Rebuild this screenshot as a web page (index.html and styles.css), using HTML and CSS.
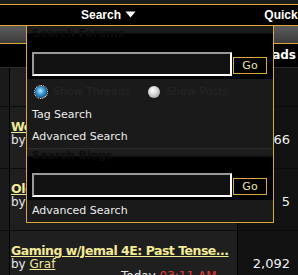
FILE: index.html
```html
<!DOCTYPE html>
<html lang="en">
<head>
    <meta charset="UTF-8">
    <title>Forum</title>
    <link rel="stylesheet" href="styles.css">
</head>
<body>
    <div class="topstrip"></div>
    <div class="navbar">
        <span class="navlink search-link">Search <svg class="arrow" width="11" height="7" viewBox="0 0 11 7"><path d="M0.5 0.5 H10.5 L5.5 6.5 Z" fill="#fff"/></svg></span>
        <span class="navlink quick-link">Quick Links</span>
    </div>
    <div class="tcat"></div>

    <table class="forums">
        <tr class="colhead">
            <td class="c-icon"></td>
            <td class="c-main"></td>
            <td class="c-num">Threads</td>
            <td class="c-more"></td>
        </tr>
        <tr class="row-short">
            <td class="c-icon"></td>
            <td class="c-main"></td>
            <td class="c-num"></td>
            <td class="c-more"></td>
        </tr>
        <tr class="row">
            <td class="c-icon"></td>
            <td class="c-main">
                <a class="title" href="#">Welcome to the Boards</a><br>
                by <a class="user" href="#">Admin</a><br>
                <span class="when">Yesterday <span class="time">11:42 PM</span></span>
            </td>
            <td class="c-num">66</td>
            <td class="c-more"></td>
        </tr>
        <tr class="row">
            <td class="c-icon"></td>
            <td class="c-main">
                <a class="title" href="#">Old Campaign Archive</a><br>
                by <a class="user" href="#">Mira</a><br>
                <span class="when">Today <span class="time">01:05 AM</span></span>
            </td>
            <td class="c-num">5</td>
            <td class="c-more"></td>
        </tr>
        <tr class="row">
            <td class="c-icon"></td>
            <td class="c-main">
                <a class="title" href="#">Gaming w/Jemal 4E: Past Tense...</a><br>
                by <a class="user" href="#">Graf</a><br>
                <span class="when">Today <span class="time">03:11 AM</span></span>
            </td>
            <td class="c-num">2,092</td>
            <td class="c-more"></td>
        </tr>
    </table>

    <!-- search dropdown, open over the forum list -->
    <div class="popup">
        <div class="menu-head">Search Forums</div>
        <div class="menu-form">
            <input class="field" type="text">
            <button class="go">Go</button>
        </div>
        <div class="menu-radios">
            <span class="radio checked"></span><span class="radio-label">Show Threads</span>
            <span class="radio"></span><span class="radio-label">Show Posts</span>
        </div>
        <div class="menu-option">Tag Search</div>
        <div class="menu-option">Advanced Search</div>

        <div class="menu-head">Search Blogs</div>
        <div class="menu-form">
            <input class="field" type="text">
            <button class="go">Go</button>
        </div>
        <div class="menu-option">Advanced Search</div>
    </div>
</body>
</html>
```

FILE: styles.css
```css
body {
    margin: 0;
    background: #1a1a1a;
    font-family: "DejaVu Sans", Verdana, sans-serif;
    font-size: 11px;
    color: #e6e6e6;
    overflow: hidden;
    position: relative;
}

.topstrip {
    height: 4px;
    background: #1d1d1d;
    border-bottom: 1px solid #d9a93a;
}

.navbar {
    height: 20px;
    background: #000;
    display: flex;
    align-items: center;
    padding-left: 81px;
    border-bottom: 1px solid #d9a93a;
    white-space: nowrap;
}

.navlink {
    font-family: "Liberation Sans", Arial, sans-serif;
    font-weight: bold;
    font-size: 12px;
    color: #fff;
}

.arrow {
    margin-left: 1px;
    vertical-align: 1px;
}

.quick-link {
    margin-left: 128px;
}

.tcat {
    height: 17px;
    background: linear-gradient(#5c5c5c, #3c3c3c);
    border-bottom: 1px solid #d9a93a;
}

.forums {
    border-collapse: collapse;
    table-layout: fixed;
    width: 330px;
}

.forums td {
    padding: 0;
    vertical-align: middle;
    border-right: 1px solid #000;
}

.c-icon {
    width: 9px;
}

.c-main {
    width: 226px;
    padding-left: 1px !important;
    background: #1f1f1f;
    font-size: 12px;
    line-height: 12.5px;
    color: #e8e8e8;
    white-space: nowrap;
    overflow: hidden;
}

.row .c-main {
    padding-top: 6px !important;
}

.c-num {
    width: 58px;
    background: #121212;
    text-align: right;
    padding-right: 11px !important;
    font-size: 13px;
    color: #f0f0f0;
}

.row .c-num {
    padding-top: 5px !important;
}

.c-more {
    width: 30px;
    background: #1a1a1a;
}

.colhead {
    height: 23px;
}

.colhead td {
    background: #000;
    font-weight: bold;
    font-size: 12px;
    color: #fff;
    border-bottom: 1px solid #2a2a2a;
}

.colhead .c-num {
    padding-right: 5px !important;
}

.row td,
.row-short td {
    border-bottom: 1px solid #0c0c0c;
}

.row-short {
    height: 39px;
}

.row {
    height: 62px;
}

.title {
    font-weight: bold;
    font-size: 12.5px;
    letter-spacing: -0.5px;
    color: #f2ea96;
}

.user {
    color: #f2ea96;
}

.time {
    color: #e03a3a;
}

.when {
    padding-left: 110px;
}

/* dropdown */
.popup {
    position: absolute;
    left: 26px;
    top: 25px;
    width: 246px;
    border: 1px solid #d9a93a;
    background: #1a1a1a;
}

.menu-head {
    height: 22px;
    box-sizing: border-box;
    padding: 1px 5px 0;
    background: linear-gradient(#1e1e1e 0, #1a1a1a 7px, #000 8px);
    color: #0d0d0d;
    font-weight: bold;
    font-size: 11px;
}

.menu-option + .menu-head {
    border-top: 1px solid #2c2c2c;
    height: 21px;
    padding-top: 0;
}

.menu-head + .menu-form {
    background: #000;
}

.menu-form {
    display: flex;
    padding: 4px 5px 3px;
}

.field {
    width: 200px;
    height: 24px;
    box-sizing: border-box;
    margin: 0;
    background: #121212;
    border: 2px solid;
    border-color: #9a9a9a #fff #fff #9a9a9a;
    color: #fff;
}

.go {
    align-self: flex-end;
    margin: 0 0 2px 1px;
    width: 34px;
    height: 17px;
    padding: 0;
    background: #000;
    border: 1px solid #d9a93a;
    color: #eee6a6;
    font-family: "DejaVu Sans", Verdana, sans-serif;
    font-size: 11px;
}

.menu-radios {
    height: 25px;
    display: flex;
    align-items: center;
    padding-left: 8px;
    color: #262626;
    white-space: nowrap;
}

.radio {
    flex-shrink: 0;
    width: 12px;
    height: 12px;
    border-radius: 50%;
    background: radial-gradient(circle at 40% 35%, #ffffff 0, #d8d8d8 40%, #9a9a9a 90%);
}

.radio.checked {
    background: radial-gradient(circle at 45% 40%, #c4ecff 0, #3ba0dc 35%, #1a5c92 70%, #dfe8ef 75%);
    outline: 1px dotted #fff;
    outline-offset: 0;
}

.radio-label {
    margin-left: 6px;
    margin-right: 18px;
}

.menu-option {
    height: 22px;
    line-height: 22px;
    padding-left: 5px;
    color: #ececec;
}
```
